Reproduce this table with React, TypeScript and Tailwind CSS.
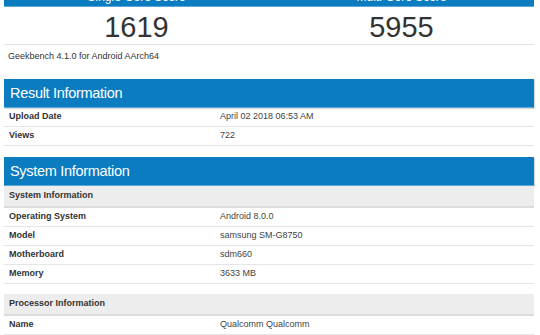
import React from 'react';

type Row = { label: string; value: string };

const resultRows: Row[] = [
  { label: 'Upload Date', value: 'April 02 2018 06:53 AM' },
  { label: 'Views', value: '722' },
];

const systemRows: Row[] = [
  { label: 'Operating System', value: 'Android 8.0.0' },
  { label: 'Model', value: 'samsung SM-G8750' },
  { label: 'Motherboard', value: 'sdm660' },
  { label: 'Memory', value: '3633 MB' },
];

const processorRows: Row[] = [{ label: 'Name', value: 'Qualcomm Qualcomm' }];

const SectionHeader: React.FC<{ title: string }> = ({ title }) => (
  <div className="h-[29px] bg-[#0b7cc0] border-b border-[#5aa9d9] shadow-[1px_1px_1px_rgba(0,0,0,0.15)] flex items-center px-[6px] text-white text-[14.5px] tracking-[-0.3px] leading-none">
    {title}
  </div>
);

const SubHeader: React.FC<{ title: string }> = ({ title }) => (
  <div className="h-[22px] bg-[#ededed] border-b-2 border-[#dcdcdc] flex items-center px-[5px] text-[9px] font-bold text-[#333]">
    {title}
  </div>
);

const InfoRows: React.FC<{ rows: Row[] }> = ({ rows }) => (
  <div>
    {rows.map((r) => (
      <div key={r.label} className="h-[19px] flex items-center border-b border-[#e6e6e6] text-[9px] text-[#333]">
        <div className="w-[216px] pl-[5px] font-bold">{r.label}</div>
        <div className="text-[#444]">{r.value}</div>
      </div>
    ))}
  </div>
);

export default function App() {
  return (
    <div className="w-[540px] h-[335px] overflow-hidden bg-white font-['Liberation_Sans',Arial,sans-serif]">
      <div className="mx-[4px] w-[530px]">
        <div className="h-[7px] overflow-hidden bg-[#0b7cc0] border-b border-[#5aa9d9] flex">
          <div className="flex-1 text-center text-white text-[12px] leading-none -mt-[9px]">Single-Core Score</div>
          <div className="flex-1 text-center text-white text-[12px] leading-none -mt-[9px]">Multi-Core Score</div>
        </div>
        <div className="flex h-[38px] border-b border-[#e2e2e2]">
          <div className="flex-1 flex items-center justify-center text-[29px] text-[#333] leading-none pt-[3px]">1619</div>
          <div className="flex-1 flex items-center justify-center text-[29px] text-[#333] leading-none pt-[3px]">5955</div>
        </div>
        <div className="h-[23px] flex items-center px-[4px] text-[9px] text-[#333]">Geekbench 4.1.0 for Android AArch64</div>

        <div className="mt-[11px]">
          <SectionHeader title="Result Information" />
          <InfoRows rows={resultRows} />
        </div>

        <div className="mt-[11px]">
          <SectionHeader title="System Information" />
          <SubHeader title="System Information" />
          <InfoRows rows={systemRows} />
        </div>

        <div className="mt-[10px]">
          <SubHeader title="Processor Information" />
          <InfoRows rows={processorRows} />
        </div>
      </div>
    </div>
  );
}
